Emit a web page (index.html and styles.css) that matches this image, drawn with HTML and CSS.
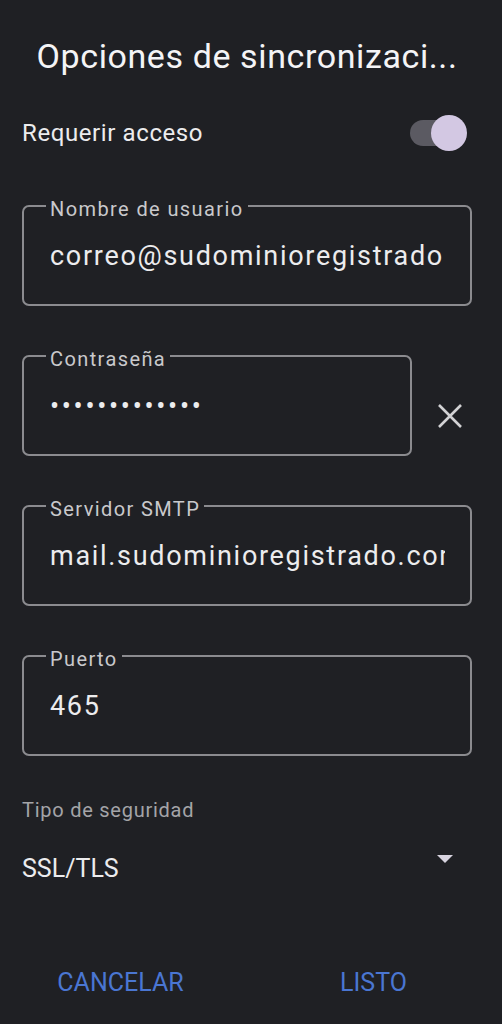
FILE: index.html
```html
<!DOCTYPE html>
<html lang="es">
<head>
  <meta charset="UTF-8" />
  <meta name="viewport" content="width=device-width, initial-scale=1" />
  <title>Opciones de sincronización</title>
  <link rel="stylesheet" href="styles.css">
</head>
<body>
  <div class="dialog">
    <h1 class="title">Opciones de sincronizaci...</h1>

    <div class="switch-row">
      <span>Requerir acceso</span>
      <span class="switch"><span class="thumb"></span></span>
    </div>

    <fieldset class="field">
      <legend>Nombre de usuario</legend>
      <div class="value">correo@sudominioregistrado</div>
    </fieldset>

    <div class="field-row">
      <fieldset class="field short">
        <legend>Contraseña</legend>
        <div class="value dots">•••••••••••••</div>
      </fieldset>
      <svg class="clear" width="26" height="26" viewBox="0 0 26 26">
        <path d="M2 2 L24 24 M24 2 L2 24" stroke="#d2d2d4" stroke-width="2.6" fill="none" />
      </svg>
    </div>

    <fieldset class="field">
      <legend>Servidor SMTP</legend>
      <div class="value">mail.sudominioregistrado.com</div>
    </fieldset>

    <fieldset class="field">
      <legend>Puerto</legend>
      <div class="value">465</div>
    </fieldset>

    <p class="select-label">Tipo de seguridad</p>
    <div class="select">
      <span>SSL/TLS</span>
      <svg class="caret" width="16" height="8" viewBox="0 0 16 8">
        <path d="M0 0 H16 L8 8 Z" fill="#d8d4e0" />
      </svg>
    </div>

    <div class="buttons">
      <button>CANCELAR</button>
      <button>LISTO</button>
    </div>
  </div>
</body>
</html>
```

FILE: styles.css
```css
body {
  margin: 0;
  background: #1f2024;
  font-family: Roboto, "Noto Sans", sans-serif;
  color: #ececee;
}
.dialog {
  padding: 36px 30px 0 22px;
  display: flex;
  flex-direction: column;
}
.title {
  margin: 0;
  font-size: 34px;
  line-height: 40px;
  font-weight: 400;
  letter-spacing: 0.6px;
  text-align: center;
  color: #f4f4f6;
}
.switch-row {
  display: flex;
  justify-content: space-between;
  align-items: center;
  height: 40px;
  margin-top: 37px;
  font-size: 24px;
  letter-spacing: 0.6px;
}
.switch {
  position: relative;
  width: 52px;
  height: 26px;
  border-radius: 13px;
  background: #5b5a62;
  margin-right: 10px;
}
.switch .thumb {
  position: absolute;
  right: -5px;
  top: -5px;
  width: 36px;
  height: 36px;
  border-radius: 50%;
  background: #d3c8e3;
}
.field {
  margin: 37px 0 0 0;
  padding: 0 25px 0 22px;
  border: 2px solid #8b8b8f;
  border-radius: 7px;
  min-width: 0;
}
.switch-row + .field {
  margin-top: 40px;
}
.field legend {
  padding: 6px 4px 0;
  font-size: 20px;
  line-height: 20px;
  letter-spacing: 1.4px;
  color: #c9c9cc;
}
.field .value {
  padding: 22px 0 33px 4px;
  font-size: 27px;
  line-height: 30px;
  letter-spacing: 1.7px;
  white-space: nowrap;
  overflow: hidden;
}
.value.dots {
  letter-spacing: 2.7px;
}
.field-row {
  display: flex;
  align-items: center;
  margin-top: 37px;
}
.field-row .field {
  margin-top: 0;
}
.field.short {
  width: 390px;
  box-sizing: border-box;
}
.clear {
  margin: 33px 0 0 25px;
}
.select-label {
  margin: 42px 0 0 0;
  font-size: 20px;
  line-height: 24px;
  letter-spacing: 0.75px;
  color: #a4a4a8;
}
.select {
  display: flex;
  justify-content: space-between;
  align-items: flex-start;
  margin-top: 30px;
  font-size: 25px;
  line-height: 34px;
}
.caret {
  margin: 3px 19px 0 0;
}
.buttons {
  display: flex;
  margin: 82px -28px 0 -28px;
}
.buttons button {
  flex: 1;
  background: none;
  border: none;
  padding: 0;
  font-family: inherit;
  font-size: 25px;
  line-height: 30px;
  color: #4a76d2;
  cursor: pointer;
}
```
